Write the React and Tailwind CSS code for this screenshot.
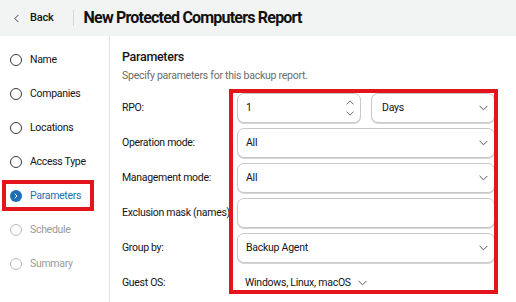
import React from "react";

const font = { fontFamily: "Roboto, 'Noto Sans', 'Liberation Sans', sans-serif" };

function Chevron({ className = "" }) {
  return (
    <svg viewBox="0 0 10 6" className={className} fill="none" stroke="currentColor" strokeWidth="1.1" strokeLinecap="round" strokeLinejoin="round">
      <path d="M1 1l4 4 4-4" />
    </svg>
  );
}

function Step({ label, state }) {
  if (state === "active") {
    return (
      <div className="relative h-[34px] flex items-center pl-[10px]">
        <span className="w-[12px] h-[12px] rounded-full bg-[#1f6fb5] flex items-center justify-center">
          <svg viewBox="0 0 6 8" className="w-[4px] h-[6px]" fill="none" stroke="white" strokeWidth="1.4" strokeLinecap="round" strokeLinejoin="round">
            <path d="M1.5 1l3 3-3 3" />
          </svg>
        </span>
        <span className="ml-[8px] text-[10.5px] tracking-[-0.3px] text-[#1f6fb5]">{label}</span>
        <div className="absolute left-[2px] top-[1px] w-[92px] h-[31px] border-[4px] border-[#e3141c] pointer-events-none" />
      </div>
    );
  }
  const dis = state === "disabled";
  return (
    <div className="h-[34px] flex items-center pl-[10px]">
      <span className={`w-[12px] h-[12px] rounded-full border ${dis ? "border-[#bdbdbd]" : "border-[#3a3a3a]"}`} />
      <span className={`ml-[8px] text-[10.5px] tracking-[-0.3px] ${dis ? "text-[#9a9a9a]" : "text-[#141414]"}`}>{label}</span>
    </div>
  );
}

function Box({ children, className = "" }) {
  return (
    <div className={`h-[30px] rounded-[7px] border border-[#c8c8c8] shadow-[0_1px_0_#d6d6d6] bg-white flex items-center text-[10.5px] tracking-[-0.25px] text-[#141414] ${className}`}>
      {children}
    </div>
  );
}

function Select({ value, className = "" }) {
  return (
    <Box className={`pl-[8px] pr-[6px] justify-between ${className}`}>
      <span>{value}</span>
      <Chevron className="w-[9px] h-[6px] text-[#555]" />
    </Box>
  );
}

function Label({ children }) {
  return <div className="h-[30px] flex items-center text-[10.5px] tracking-[-0.3px] text-[#141414] whitespace-nowrap">{children}</div>;
}

export default function App() {
  return (
    <div className="w-[516px] h-[302px] bg-white overflow-hidden" style={font}>
      <div className="h-[36px] bg-[#f2f3f3] flex items-center">
        <svg viewBox="0 0 6 10" className="ml-[14px] w-[5px] h-[9px]" fill="none" stroke="#333" strokeWidth="1.1" strokeLinecap="round" strokeLinejoin="round">
          <path d="M5 1L1 5l4 4" />
        </svg>
        <span className="ml-[11px] text-[11px] font-medium tracking-[-0.2px] text-[#141414]">Back</span>
        <div className="ml-[19px] w-px h-[16px] bg-[#d6d6d6]" />
        <span className="ml-[10px] text-[16px] font-bold text-[#111] tracking-[-0.8px]">New Protected Computers Report</span>
      </div>
      <div className="flex h-[266px]">
        <div className="w-[110px] border-r border-[#e2e2e2] pt-[7px] flex flex-col">
          <Step label="Name" />
          <Step label="Companies" />
          <Step label="Locations" />
          <Step label="Access Type" />
          <Step label="Parameters" state="active" />
          <Step label="Schedule" state="disabled" />
          <Step label="Summary" state="disabled" />
        </div>
        <div className="relative flex-1 pl-[12px]">
          <div className="mt-[12px] text-[12.5px] font-medium tracking-[-0.3px] text-[#141414] leading-[18px]">Parameters</div>
          <div className="mt-[3px] text-[10.5px] tracking-[-0.25px] text-[#6b6b6b] leading-[14px]">Specify parameters for this backup report.</div>
          <div className="mt-[10px] grid grid-cols-[115px_258px] gap-y-[5px]">
            <Label>RPO:</Label>
            <div className="grid grid-cols-2 gap-[10px]">
              <Box className="pl-[8px] pr-[6px] justify-between">
                <span>1</span>
                <div className="flex flex-col gap-[6px] text-[#555]">
                  <Chevron className="w-[8px] h-[5px] rotate-180" />
                  <Chevron className="w-[8px] h-[5px]" />
                </div>
              </Box>
              <Select value="Days" className="pl-[10px]" />
            </div>
            <Label>Operation mode:</Label>
            <Select value="All" />
            <Label>Management mode:</Label>
            <Select value="All" />
            <Label>Exclusion mask (names):</Label>
            <Box />
            <Label>Group by:</Label>
            <Select value="Backup Agent" />
            <Label>Guest OS:</Label>
            <div className="h-[30px] flex items-center pl-[8px] text-[10.5px] tracking-[-0.25px] text-[#141414]">
              <span>Windows, Linux, macOS</span>
              <Chevron className="ml-[7px] w-[9px] h-[6px] text-[#555]" />
            </div>
          </div>
          <div className="absolute left-[119px] top-[53px] w-[269px] h-[205px] border-[4px] border-[#e3141c] pointer-events-none" />
        </div>
      </div>
    </div>
  );
}
